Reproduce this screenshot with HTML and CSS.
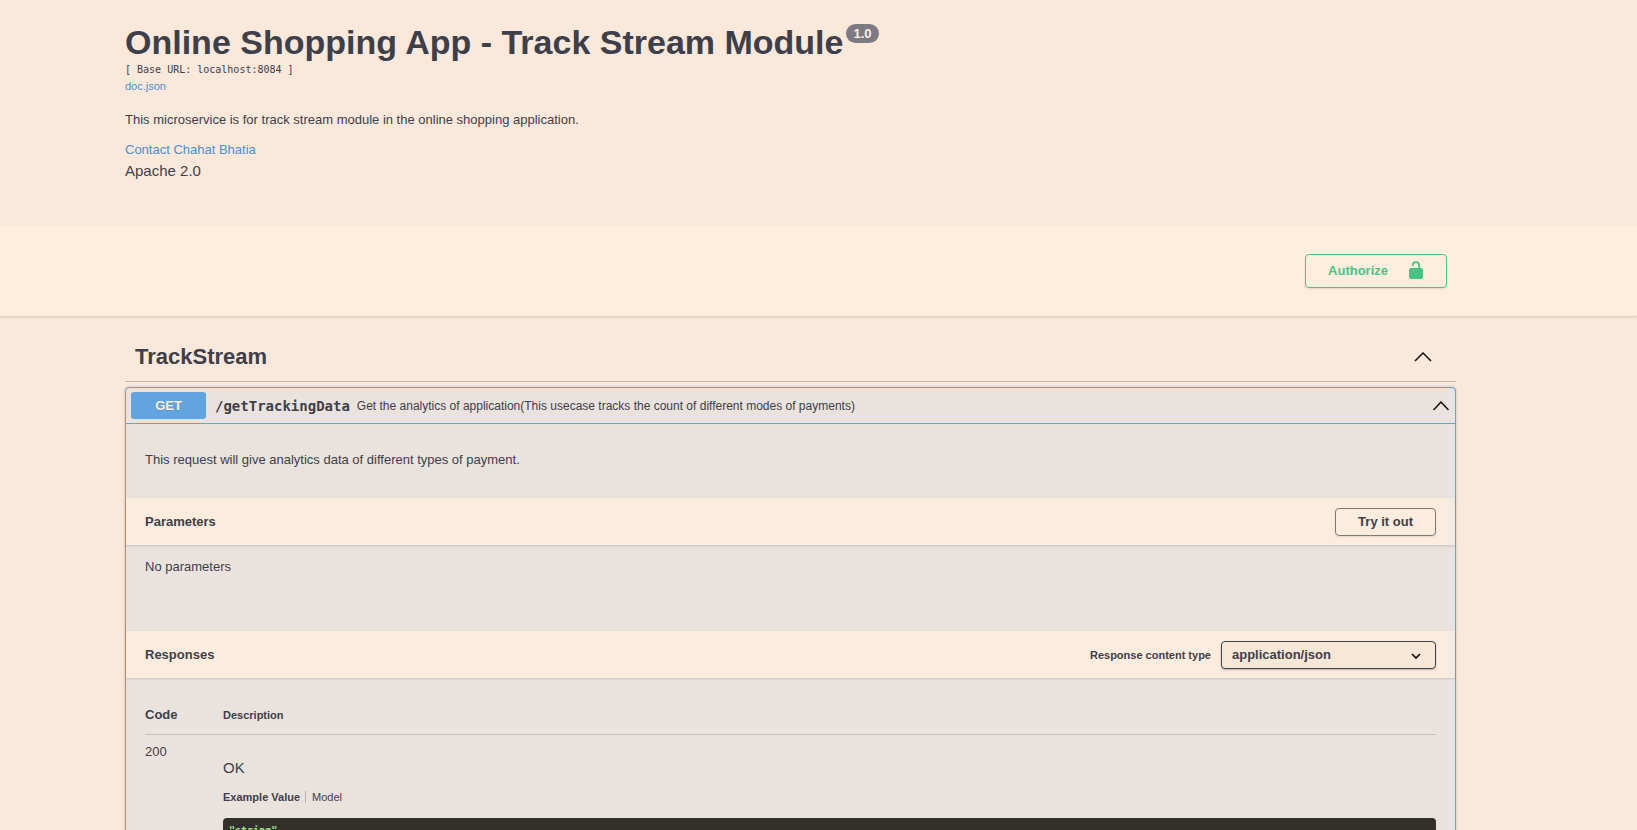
FILE: index.html
```html
<!DOCTYPE html>
<html lang="en">
<head>
<meta charset="utf-8">
<title>Online Shopping App - Track Stream Module</title>
<link rel="stylesheet" href="styles.css">
</head>
<body>
<header class="info wrapper">
  <h1 class="title">Online Shopping App - Track Stream Module<span class="version">1.0</span></h1>
  <p class="base-url">[ Base URL: localhost:8084 ]</p>
  <p class="doc"><a href="#doc">doc.json</a></p>
  <p class="about">This microservice is for track stream module in the online shopping application.</p>
  <p class="contact"><a href="#contact">Contact Chahat Bhatia</a></p>
  <p class="license">Apache 2.0</p>
</header>
<section class="schemes wrapper">
  <button class="authorize" type="button">Authorize
    <svg width="16" height="20" viewBox="0 0 16 20" aria-hidden="true"><path d="M4.700 5V4.300a3.200 3.200 0 0 1 6.400 0V8" fill="none" stroke="currentColor" stroke-width="1.800"/><rect x="1" y="7" width="14" height="11" rx="2" fill="currentColor"/></svg>
  </button>
</section>
<main class="wrapper">
  <div class="tag">
    <h2>TrackStream</h2>
    <button class="toggle" type="button" aria-label="Collapse TrackStream"><svg width="18" height="10" viewBox="0 0 18 10"><path d="M1 9l8-8 8 8" fill="none" stroke="currentColor" stroke-width="1.5"/></svg></button>
  </div>
  <article class="operation">
    <div class="summary">
      <span class="method">GET</span>
      <span class="path">/getTrackingData</span>
      <span class="brief">Get the analytics of application(This usecase tracks the count of different modes of payments)</span>
      <button class="toggle" type="button" aria-label="Collapse operation"><svg width="16" height="10" viewBox="0 0 16 10"><path d="M0.500 9l7.500-8 7.500 8" fill="none" stroke="currentColor" stroke-width="1.5"/></svg></button>
    </div>
    <p class="description">This request will give analytics data of different types of payment.</p>
    <div class="section-header">
      <h3>Parameters</h3>
      <button class="try" type="button">Try it out</button>
    </div>
    <p class="empty">No parameters</p>
    <div class="section-header">
      <h3>Responses</h3>
      <label class="content-label" for="content-type">Response content type</label>
      <span class="select-box">
        <select id="content-type"><option>application/json</option></select>
        <svg class="caret" width="10" height="6" viewBox="0 0 10 6" aria-hidden="true"><path d="M1 1l4 4 4-4" fill="none" stroke="currentColor" stroke-width="1.7"/></svg>
      </span>
    </div>
    <table class="responses">
      <thead><tr><th class="code">Code</th><th>Description</th></tr></thead>
      <tbody><tr>
        <td class="code">200</td>
        <td>
          <p class="status">OK</p>
          <div class="tabs"><button class="active" type="button">Example Value</button><button type="button">Model</button></div>
          <pre class="example">"string"</pre>
        </td>
      </tr></tbody>
    </table>
  </article>
</main>
</body>
</html>
```
FILE: styles.css
```css
* { box-sizing: border-box; }
html { overflow: hidden; height: 100%; }
body {
  height: 100%;
  margin: 0;
  overflow: hidden;
  background: #fae8da;
  color: #3d404a;
  font: 13px/16px "Liberation Sans", Arial, sans-serif;
}
h1, h2, h3, p, pre { margin: 0; }
button, select { font: inherit; color: inherit; }
button { padding: 0; border: 0; background: none; cursor: pointer; }
svg { display: block; }
a { color: #4990d0; text-decoration: none; }
.wrapper { padding-left: 125px; padding-right: 181px; }

.info { padding-top: 22px; padding-bottom: 45px; }
.title { display: flex; align-items: flex-start; gap: 3px; font-size: 34px; line-height: 40px; }
.version {
  margin-top: 2px;
  padding: 0 7px;
  border-radius: 10px;
  background: #7d7b82;
  color: #ffeedd;
  font-size: 13px;
  line-height: 19px;
}
.base-url { font: 10px/16px "DejaVu Sans Mono", monospace; }
.doc { font-size: 11px; }
.about { margin-top: 18px; }
.contact { margin-top: 14px; }
.license { margin-top: 3px; font-size: 15px; line-height: 20px; }

.schemes {
  display: flex;
  justify-content: flex-end;
  padding-top: 28px;
  padding-bottom: 28px;
  border-bottom: 1px solid #e0d0c2;
  box-shadow: 0 1px 2px rgba(0, 0, 0, .08);
  background: #ffeedd;
}
.authorize {
  display: flex;
  align-items: center;
  gap: 20px;
  height: 34px;
  margin-right: 9px;
  padding: 0 22px;
  border: 1px solid #49c382;
  border-radius: 4px;
  box-shadow: 0 1px 2px rgba(0, 0, 0, .1);
  color: #49c382;
  font-weight: bold;
}

.tag {
  display: flex;
  align-items: center;
  justify-content: space-between;
  margin-bottom: 5px;
  padding: 25px 24px 9px 10px;
  border-bottom: 1px solid #c3b3aa;
}
.tag h2 { font-size: 22px; line-height: 30px; }
.toggle { color: #111; }

.operation {
  border: 1px solid #61a4df;
  border-radius: 4px;
  box-shadow: 0 0 3px rgba(0, 0, 0, .19);
  background: #eae2dd;
}
.summary {
  display: flex;
  align-items: center;
  height: 36px;
  padding: 0 6px 0 5px;
  border-bottom: 1px solid #61a4df;
}
.method {
  width: 75px;
  border-radius: 3px;
  background: #61a4df;
  color: #fcecdd;
  font-weight: bold;
  line-height: 27px;
  text-align: center;
  text-shadow: 0 1px 0 rgba(0, 0, 0, .1);
}
.path { margin: 0 7px 0 9px; font: bold 14px/18px "DejaVu Sans Mono", monospace; }
.brief { flex: 1; font-size: 12px; }
.description { padding: 28px 19px 30px; }
.section-header {
  display: flex;
  align-items: center;
  height: 47px;
  padding: 0 19px;
  background: #fcecdd;
  box-shadow: 0 1px 2px rgba(0, 0, 0, .15);
}
.section-header h3 { flex: 1; font-size: 13px; }
.try {
  height: 28px;
  padding: 0 22px;
  border: 1px solid #807a76;
  border-radius: 4px;
  box-shadow: 0 1px 2px rgba(0, 0, 0, .1);
  font-weight: bold;
}
.empty { padding: 14px 19px 56px; }
.content-label { margin-right: 10px; font-size: 11px; font-weight: bold; }
.select-box { position: relative; }
.select-box select {
  display: block;
  width: 215px;
  height: 28px;
  padding: 0 10px;
  border: 1px solid #41444e;
  border-radius: 4px;
  box-shadow: 0 1px 2px rgba(0, 0, 0, .25);
  background: #f7e7d7;
  appearance: none;
  font-weight: bold;
}
.caret { position: absolute; top: 12px; right: 15px; color: #111; pointer-events: none; }

.responses { width: calc(100% - 38px); margin: 29px 19px; border-collapse: collapse; }
.responses th { padding: 0 0 11px; border-bottom: 1px solid #c9c0bc; font-size: 11px; text-align: left; }
.responses td { padding: 9px 0 0; vertical-align: top; }
.responses .code { width: 78px; font-size: 13px; }
.status { margin-top: 14px; font-size: 15px; line-height: 20px; }
.tabs { display: flex; margin-top: 13px; font-size: 11px; line-height: 12px; }
.tabs .active { margin-right: 6px; padding-right: 5px; border-right: 1px solid #b9b1ad; font-weight: bold; }
.example {
  margin-top: 15px;
  padding: 6px;
  border-radius: 4px;
  background: #33302b;
  color: #98e681;
  font: bold 10px/13px "DejaVu Sans Mono", monospace;
}
```
